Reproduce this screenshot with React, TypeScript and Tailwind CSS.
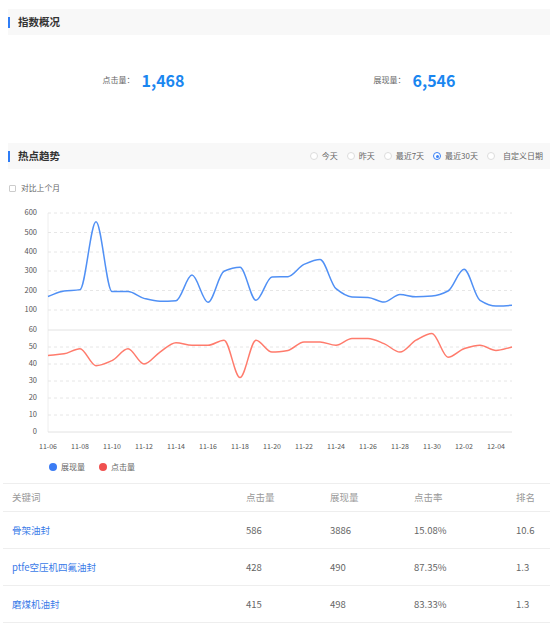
import React from "react";

const impressions = [170, 198, 205, 555, 195, 195, 160, 145, 148, 280, 140, 300, 320, 150, 270, 272, 335, 360, 210, 167, 165, 141, 180, 168, 172, 198, 310, 150, 120, 124];
const clicks = [45, 46, 49, 39, 42, 49, 40, 47, 52.5, 51, 51, 54, 32, 54, 47, 48, 53, 53, 51, 55, 55, 52, 47, 54, 58, 44, 49, 51, 48, 50];

const dates = ["11-06", "11-08", "11-10", "11-12", "11-14", "11-16", "11-18", "11-20", "11-22", "11-24", "11-26", "11-28", "11-30", "12-02", "12-04"];

const yTicks: [string, number][] = [
    ["600", 213], ["500", 232.5], ["400", 252], ["300", 271], ["200", 290.5], ["100", 310],
    ["60", 330], ["50", 347], ["40", 364], ["30", 381], ["20", 398], ["10", 415], ["0", 432],
];

const rows = [
    { kw: "骨架油封", click: "586", show: "3886", rate: "15.08%", rank: "10.6" },
    { kw: "ptfe空压机四氟油封", click: "428", show: "490", rate: "87.35%", rank: "1.3" },
    { kw: "磨煤机油封", click: "415", show: "498", rate: "83.33%", rank: "1.3" },
];

function yOf(v: number) {
    if (v >= 100) return 310 - (v - 100) * 0.194;
    if (v >= 60) return 330 - (v - 60) * 0.5;
    return 432 - v * 1.7;
}

// monotone cubic, so peaks stay rounded without overshoot
function smoothPath(values: number[]) {
    const h = 16;
    const xs = values.map((_, i) => 48 + i * h);
    const ys = values.map(yOf);
    const n = ys.length;
    const s = ys.slice(1).map((y, i) => (y - ys[i]) / h);
    const m = ys.map((_, i) => {
        if (i === 0) return s[0];
        if (i === n - 1) return s[n - 2];
        const a = s[i - 1];
        const b = s[i];
        if (a * b <= 0) return 0;
        return (2 * a * b) / (a + b);
    });
    let d = `M${xs[0]},${ys[0]}`;
    for (let i = 0; i < n - 1; i++) {
        const c1x = xs[i] + h / 3;
        const c1y = ys[i] + (m[i] * h) / 3;
        const c2x = xs[i + 1] - h / 3;
        const c2y = ys[i + 1] - (m[i + 1] * h) / 3;
        d += ` C${c1x},${c1y} ${c2x},${c2y} ${xs[i + 1]},${ys[i + 1]}`;
    }
    return d;
}

function SectionHeader({ title, children }: { title: string; children?: React.ReactNode }) {
    return (
        <div className="ml-2 h-[26px] bg-[#f8f8f8] flex items-center">
            <span className="w-[2px] h-[11px] bg-[#2f7df6]" />
            <span className="ml-[8px] text-[10.5px] font-bold text-[#333]">{title}</span>
            <div className="ml-auto">{children}</div>
        </div>
    );
}

function Radio({ label, checked }: { label: string; checked?: boolean }) {
    return (
        <label className="flex items-center gap-[4px] text-[8px] text-[#666]">
            <span
                className={`w-[8px] h-[8px] rounded-full border flex items-center justify-center bg-white ${checked ? "border-[#3b82f6]" : "border-[#ddd]"}`}
            >
                {checked && <span className="w-[3px] h-[3px] rounded-full bg-[#3b82f6]" />}
            </span>
            {label}
        </label>
    );
}

export default function App() {
    return (
        <div
            className="w-[550px] min-h-[627px] bg-white pt-[9px]"
            style={{ fontFamily: '"Noto Sans CJK SC", "Noto Sans", sans-serif' }}
        >
            {/* 指数概况 */}
            <SectionHeader title="指数概况" />
            <div className="ml-2 h-[108px] grid grid-cols-2 items-start pt-[35px]">
                <div className="flex items-center justify-center gap-[7px]">
                    <span className="text-[8px] text-[#666]">点击量：</span>
                    <span className="text-[16px] font-bold text-[#1a86f0] leading-[20px]">1,468</span>
                </div>
                <div className="flex items-center justify-center gap-[7px]">
                    <span className="text-[8px] text-[#666]">展现量：</span>
                    <span className="text-[16px] font-bold text-[#1a86f0] leading-[20px]">6,546</span>
                </div>
            </div>

            {/* 热点趋势 */}
            <SectionHeader title="热点趋势">
                <div className="flex items-center gap-[9px] pr-[7px]">
                    <Radio label="今天" />
                    <Radio label="昨天" />
                    <Radio label="最近7天" />
                    <Radio label="最近30天" checked />
                    <span className="flex items-center gap-[8px] text-[8px] text-[#666]">
                        <span className="w-[8px] h-[8px] rounded-full border border-[#ddd] bg-white" />
                        自定义日期
                    </span>
                </div>
            </SectionHeader>

            <div className="flex items-center gap-[5px] ml-[9px] mt-[13px] h-[12px]">
                <span className="w-[7px] h-[7px] border border-[#ccc] rounded-[1px]" />
                <span className="text-[7.8px] text-[#666]">对比上个月</span>
            </div>

            {/* chart */}
            <svg width="550" height="255" viewBox="0 200 550 255" className="block mt-[6px]">
                <line x1="48" y1="213" x2="48" y2="432" stroke="#eee" strokeWidth="1" />
                {yTicks.map(([label, y]) => (
                    <g key={label}>
                        <line
                            x1="48"
                            x2="512"
                            y1={y}
                            y2={y}
                            stroke={label === "0" || label === "60" ? "#e2e2e2" : "#e6e6e6"}
                            strokeWidth="1"
                            strokeDasharray={label === "0" || label === "60" ? undefined : "3 3"}
                        />
                        <text x="37" y={y} textAnchor="end" dominantBaseline="middle" fontSize="7.5" fill="#555">
                            {label}
                        </text>
                    </g>
                ))}
                {dates.map((d, i) => (
                    <text key={d} x={48 + i * 32} y="447" textAnchor="middle" dominantBaseline="middle" fontSize="7" fill="#555">
                        {d}
                    </text>
                ))}
                <path d={smoothPath(impressions)} fill="none" stroke="#5090f5" strokeWidth="1.5" />
                <path d={smoothPath(clicks)} fill="none" stroke="#ff7b6c" strokeWidth="1.5" />
            </svg>

            {/* legend */}
            <div className="flex items-center h-[18px] mt-[3px] ml-[49px] gap-[14px]">
                <div className="flex items-center gap-[4px]">
                    <span className="w-[8px] h-[8px] rounded-full bg-[#3b7cf4]" />
                    <span className="text-[8px] text-[#666]">展现量</span>
                </div>
                <div className="flex items-center gap-[4px]">
                    <span className="w-[8px] h-[8px] rounded-full bg-[#f0504f]" />
                    <span className="text-[8px] text-[#666]">点击量</span>
                </div>
            </div>

            {/* table */}
            <div className="ml-[3px] mt-[7px] border-t border-[#eee] text-[9.5px]">
                <div className="grid grid-cols-[234px_84px_84px_102px_1fr] px-[9px] h-[28px] items-center text-[#999] border-b border-[#eee]">
                    <span>关键词</span>
                    <span>点击量</span>
                    <span>展现量</span>
                    <span>点击率</span>
                    <span>排名</span>
                </div>
                {rows.map((r) => (
                    <div
                        key={r.kw}
                        className="grid grid-cols-[234px_84px_84px_102px_1fr] px-[9px] h-[37px] items-center text-[#666] border-b border-[#eee]"
                    >
                        <span className="text-[#3a7be8]">{r.kw}</span>
                        <span>{r.click}</span>
                        <span>{r.show}</span>
                        <span>{r.rate}</span>
                        <span>{r.rank}</span>
                    </div>
                ))}
            </div>
        </div>
    );
}
